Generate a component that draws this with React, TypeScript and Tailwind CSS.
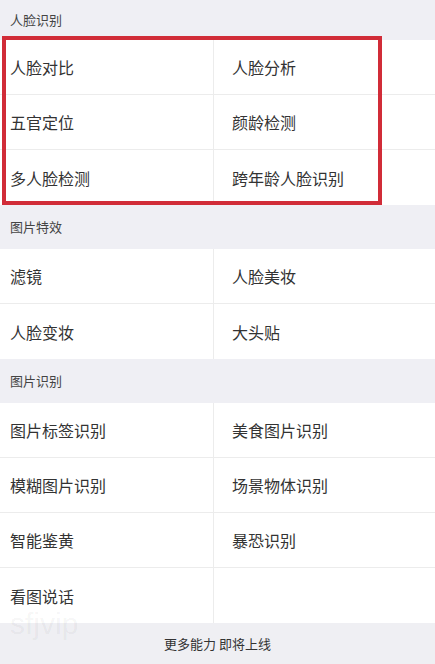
import React from "react";

const font = { fontFamily: '"Noto Sans CJK SC", "Noto Sans", sans-serif' };

function Header({ title, h }: { title: string; h: string }) {
  return (
    <div className={`flex items-center bg-[#efeff4] px-[10px] text-[13px] text-[#444] ${h}`}>
      {title}
    </div>
  );
}

function Rows({ items }: { items: [string, string][] }) {
  return (
    <div className="bg-white">
      {items.map(([a, b], i) => (
        <div
          key={i}
          className={`grid h-[55px] grid-cols-[214px_1fr] ${i < items.length - 1 ? "border-b border-[#ececec]" : ""}`}
        >
          <div className="flex items-center border-r border-[#ececec] pl-[10px] text-[16px] leading-[20px] text-[#333]">{a}</div>
          <div className="flex items-center pl-[18px] text-[16px] leading-[20px] text-[#333]">{b}</div>
        </div>
      ))}
    </div>
  );
}

export default function App() {
  return (
    <div className="relative h-[664px] w-[435px] overflow-hidden bg-white" style={font}>
      <Header title="人脸识别" h="h-[40px]" />
      <Rows
        items={[
          ["人脸对比", "人脸分析"],
          ["五官定位", "颜龄检测"],
          ["多人脸检测", "跨年龄人脸识别"],
        ]}
      />
      <Header title="图片特效" h="h-[44px]" />
      <Rows
        items={[
          ["滤镜", "人脸美妆"],
          ["人脸变妆", "大头贴"],
        ]}
      />
      <Header title="图片识别" h="h-[44px]" />
      <Rows
        items={[
          ["图片标签识别", "美食图片识别"],
          ["模糊图片识别", "场景物体识别"],
          ["智能鉴黄", "暴恐识别"],
          ["看图说话", ""],
        ]}
      />
      <div className="flex h-[41px] items-center justify-center bg-[#efeff3] text-[13px] text-[#333]">
        更多能力 即将上线
      </div>
      <div className="absolute left-[2px] top-[36px] h-[169px] w-[380px] border-[4px] border-[#d12c38]" />
      <div
        className="pointer-events-none absolute left-[10px] top-[609px] text-[30px] leading-none text-[#000]/[0.05]"
        style={{ fontFamily: '"Liberation Sans", sans-serif' }}
      >
        sfjvip
      </div>
    </div>
  );
}
